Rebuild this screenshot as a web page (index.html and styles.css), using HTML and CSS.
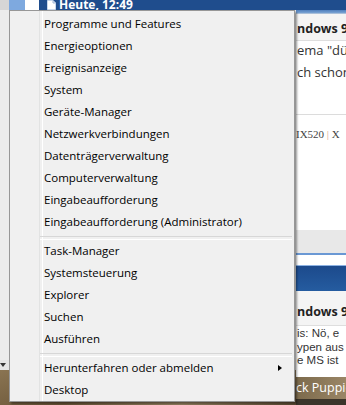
FILE: index.html
```html
<!DOCTYPE html>
<html lang="de">
<head>
    <meta charset="UTF-8">
    <title>Kontextmenü</title>
    <link rel="stylesheet" href="styles.css">
</head>
<body>
    <div class="page">
        <div class="topbar">
            <span class="tb_gray"></span>
            <span class="tb_light"></span>
            <span class="tb_white"></span>
            <div class="tb_blue">
                <svg class="doc" width="9" height="10" viewBox="0 0 9 10">
                    <path d="M0.5 0.5 H6 L8.5 3 V9.5 H0.5 Z" fill="#fff" stroke="#c9d8ec"/>
                    <path d="M6 0.5 V3 H8.5" fill="#dfe8f4" stroke="#9fb6d6"/>
                </svg>
                <span class="tb_text">Heute, 12:49</span>
            </div>
        </div>
        <div class="main">
            <div class="desk">
                <div class="desk_gray"></div>
                <div class="desk_arrow"><span></span></div>
                <div class="wallpaper"></div>
            </div>
            <div class="forum">
                <div class="f_top"></div>
                <div class="f_title">ndows 9</div>
                <div class="f_post">
                    <p>ema "dür</p>
                    <p>ch schon</p>
                </div>
                <div class="f_sig">IX520 <span class="pipe">|</span> X</div>
                <div class="f_gray"></div>
                <div class="f_tabs"></div>
                <div class="f_head"></div>
                <div class="f_title f_title2">ndows 9</div>
                <div class="f_post2">
                    <p>is: Nö, e</p>
                    <p>ypen aus</p>
                    <p>e MS ist</p>
                </div>
                <div class="f_banner">ck Puppie</div>
                <div class="f_bottom"></div>
            </div>
        </div>
    </div>

    <!-- Win+X Menü -->
    <ul class="menu">
        <li>Programme und Features</li>
        <li>Energieoptionen</li>
        <li>Ereignisanzeige</li>
        <li>System</li>
        <li>Geräte-Manager</li>
        <li>Netzwerkverbindungen</li>
        <li>Datenträgerverwaltung</li>
        <li>Computerverwaltung</li>
        <li>Eingabeaufforderung</li>
        <li>Eingabeaufforderung (Administrator)</li>
        <li class="sep"></li>
        <li>Task-Manager</li>
        <li>Systemsteuerung</li>
        <li>Explorer</li>
        <li>Suchen</li>
        <li>Ausführen</li>
        <li class="sep"></li>
        <li class="sub">Herunterfahren oder abmelden</li>
        <li>Desktop</li>
    </ul>
</body>
</html>
```

FILE: styles.css
```css
*{margin: 0;padding: 0;box-sizing: border-box;}
li{list-style-type: none;}
html,body{width: 346px;height: 405px;overflow: hidden;}
body{font-family: "Open Sans","Noto Sans",sans-serif;background: #fff;position: relative;}

.page{display: flex;flex-direction: column;height: 405px;}

/* oberer Balken */
.topbar{display: flex;height: 10px;overflow: hidden;}
.tb_gray{width: 9px;background: #d6d6d6;}
.tb_light{width: 16px;background: #7ea9df;}
.tb_white{width: 14px;background: #fff;}
.tb_blue{flex: 1;display: flex;align-items: flex-end;background: #1f4d8d;padding-left: 8px;}
.doc{display: block;}
.tb_text{margin-left: 3px;color: #fff;font-weight: bold;font-size: 12px;line-height: 11px;}

.main{flex: 1;display: flex;}

/* linker Rand (Desktop) */
.desk{width: 296px;display: flex;flex-direction: column;}
.desk_gray{flex: 1;background: #ececec;}
.desk_arrow{height: 10px;background: #e4e4e4;position: relative;}
.desk_arrow span{position: absolute;left: 0;top: 3px;border-left: 3px solid transparent;border-right: 3px solid transparent;border-top: 4px solid #333;}
.wallpaper{height: 35px;background: linear-gradient(160deg,#8a7452,#6b5638 40%,#9a8564 70%,#5e4c34);}

/* Forum rechts */
.forum{flex: 1;display: flex;flex-direction: column;font-size: 12px;color: #333;white-space: nowrap;overflow: hidden;}
.f_top{height: 4px;background: linear-gradient(#4f7fbd,#7aa3d3);border-bottom: 1px solid #a9bfd9;}
.f_title{height: 27px;padding: 5px 0 0 1px;line-height: 20px;background: #f4f4f4;border-bottom: 1px solid #dedede;font-weight: bold;font-size: 12.5px;color: #222;}
.f_post{height: 74px;border-bottom: 1px solid #dcdcdc;padding-left: 1px;}
.f_post p{line-height: 18px;margin-bottom: 4px;font-size: 13px;}
.f_sig{height: 115px;padding-top: 12px;line-height: 14px;font-family: "Liberation Serif",serif;font-size: 11px;color: #444;}
.pipe{color: #e0a08c;}
.f_gray{height: 23px;background: #e8e8e8;}
.f_tabs{height: 13px;border-top: 2px solid #6a98d4;border-bottom: 1px solid #8db2e2;background: #fff;}
.f_head{height: 25px;background: linear-gradient(#1c4a8c,#255ca0);}
.f_title2{height: 35px;padding-top: 11px;}
.f_post2{height: 51px;padding: 1px 0 0 1px;font-family: "Liberation Sans",Arial,sans-serif;}
.f_post2 p{height: 13.5px;line-height: 13.5px;font-size: 11.5px;}
.f_banner{height: 22px;line-height: 22px;background: linear-gradient(90deg,#7c6a4c,#9a8666);color: #fff;font-size: 12.5px;}
.f_bottom{flex: 1;background: #3b342a;}

/* Kontextmenü */
.menu{position: absolute;left: 9px;top: 10px;width: 286px;height: 392px;padding: 2px 2px 0 2px;background: #f0f0f0;border: 1px solid #979797;box-shadow: 2px 2px 2px rgba(0,0,0,.4);font-family: "Open Sans","Noto Sans",sans-serif;font-size: 11.5px;color: #000;}
.menu::before{content: "";position: absolute;left: 29px;top: 0;bottom: 0;width: 2px;border-left: 1px solid #e2e3e3;border-right: 1px solid #fff;}
.menu li{position: relative;height: 22px;line-height: 22px;padding-left: 32px;}
.menu .sep{height: 7px;padding: 0;margin-left: 28px;}
.menu .sep::after{content: "";position: absolute;left: 0;right: 0;top: 3px;height: 2px;border-top: 1px solid #d7d7d7;border-bottom: 1px solid #fff;}
.menu .sub::after{content: "";position: absolute;right: 10px;top: 8px;border-top: 3.5px solid transparent;border-bottom: 3.5px solid transparent;border-left: 4px solid #000;}
```
